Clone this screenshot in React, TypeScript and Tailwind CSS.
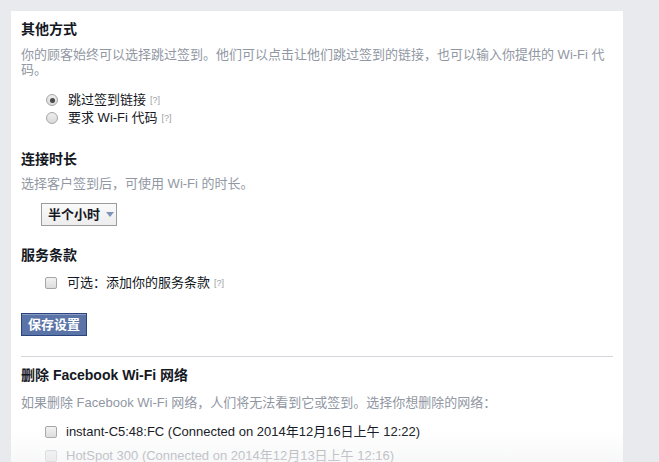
import React from 'react';

const FONT = { fontFamily: '"Liberation Sans", Arial, "Noto Sans CJK SC", sans-serif' };

function Help() {
  return <span className="ml-[4px] text-[9px] text-[#9a9da3] align-[1px]">[?]</span>;
}

function Radio({ checked }: { checked?: boolean }) {
  return (
    <span className="flex h-[12px] w-[12px] shrink-0 items-center justify-center rounded-full border border-[#a6a6a6] bg-gradient-to-b from-[#eeeeee] to-[#d9d9d9]">
      {checked && <span className="h-[5px] w-[5px] rounded-full bg-[#4a4a4a]" />}
    </span>
  );
}

function Checkbox({ faded }: { faded?: boolean }) {
  return (
    <span
      className={`h-[12px] w-[12px] shrink-0 rounded-[2px] border bg-gradient-to-b ${
        faded ? 'border-[#d3d4d7] from-[#f3f3f4] to-[#e8e8ea]' : 'border-[#a6a6a6] from-[#f2f2f2] to-[#dcdcdc]'
      }`}
    />
  );
}

function Heading({ children, className = '' }: { children: React.ReactNode; className?: string }) {
  return <h3 className={`text-[14px] font-bold leading-[18px] text-[#141823] ${className}`}>{children}</h3>;
}

function Desc({ children, className = '' }: { children: React.ReactNode; className?: string }) {
  return <p className={`text-[13px] leading-[15px] text-[#9197a3] ${className}`}>{children}</p>;
}

export default function App() {
  return (
    <div className="h-[462px] w-full overflow-hidden bg-[#e9eaed] pt-[11px] pl-[11px]" style={FONT}>
      <div className="relative h-[460px] w-[612px] bg-white px-[10px] pt-[9px]">
        <Heading>其他方式</Heading>
        <Desc className="mt-[9px]">
          你的顾客始终可以选择跳过签到。他们可以点击让他们跳过签到的链接，也可以输入你提供的 Wi-Fi 代码。
        </Desc>

        <div className="mt-[14px] ml-[25px] flex flex-col">
          <label className="flex h-[18px] items-center gap-[10px] text-[13px] text-[#141823]">
            <Radio checked />
            <span>
              跳过签到链接
              <Help />
            </span>
          </label>
          <label className="flex h-[18px] items-center gap-[10px] text-[13px] text-[#141823]">
            <Radio />
            <span>
              要求 Wi-Fi 代码
              <Help />
            </span>
          </label>
        </div>

        <Heading className="mt-[23px]">连接时长</Heading>
        <Desc className="mt-[8px]">选择客户签到后，可使用 Wi-Fi 的时长。</Desc>

        <div className="mt-[12px] ml-[20px] flex h-[23px] w-[76px] items-center gap-[6px] border border-[#9c9c9c] bg-gradient-to-b from-[#fafafa] to-[#ededed] pl-[6px] text-[13px] font-bold text-[#141823]">
          <span>半个小时</span>
          <svg width="8" height="5" viewBox="0 0 8 5">
            <path d="M0 0 L8 0 L4 5 Z" fill="#7f92b8" />
          </svg>
        </div>

        <Heading className="mt-[20px]">服务条款</Heading>
        <label className="mt-[10px] ml-[24px] flex h-[18px] items-center gap-[10px] text-[13px] text-[#141823]">
          <Checkbox />
          <span>
            可选：添加你的服务条款
            <Help />
          </span>
        </label>

        <button className="mt-[21px] flex h-[23px] items-center border border-[#29447e] bg-[#5b74a8] px-[6px] text-[13px] font-bold text-white shadow-[inset_0_1px_0_#8a9cc2]">
          保存设置
        </button>

        <div className="mt-[20px] h-px bg-[#d3d6db]" />

        <Heading className="mt-[9px]">删除 Facebook Wi-Fi 网络</Heading>
        <Desc className="mt-[11px]">如果删除 Facebook Wi-Fi 网络，人们将无法看到它或签到。选择你想删除的网络：</Desc>

        <div className="mt-[10px] ml-[24px] flex flex-col">
          <label className="flex h-[24px] items-center gap-[9px] text-[13px] text-[#141823]">
            <Checkbox />
            <span>instant-C5:48:FC (Connected on 2014年12月16日上午 12:22)</span>
          </label>
          <label className="flex h-[24px] items-center gap-[9px] text-[13px] text-[#a8abb1]">
            <Checkbox faded />
            <span>HotSpot 300 (Connected on 2014年12月13日上午 12:16)</span>
          </label>
        </div>

        <div className="pointer-events-none absolute left-0 right-0 top-[420px] h-[42px] bg-gradient-to-b from-transparent to-[#eeeff1]/60" />
      </div>
    </div>
  );
}
